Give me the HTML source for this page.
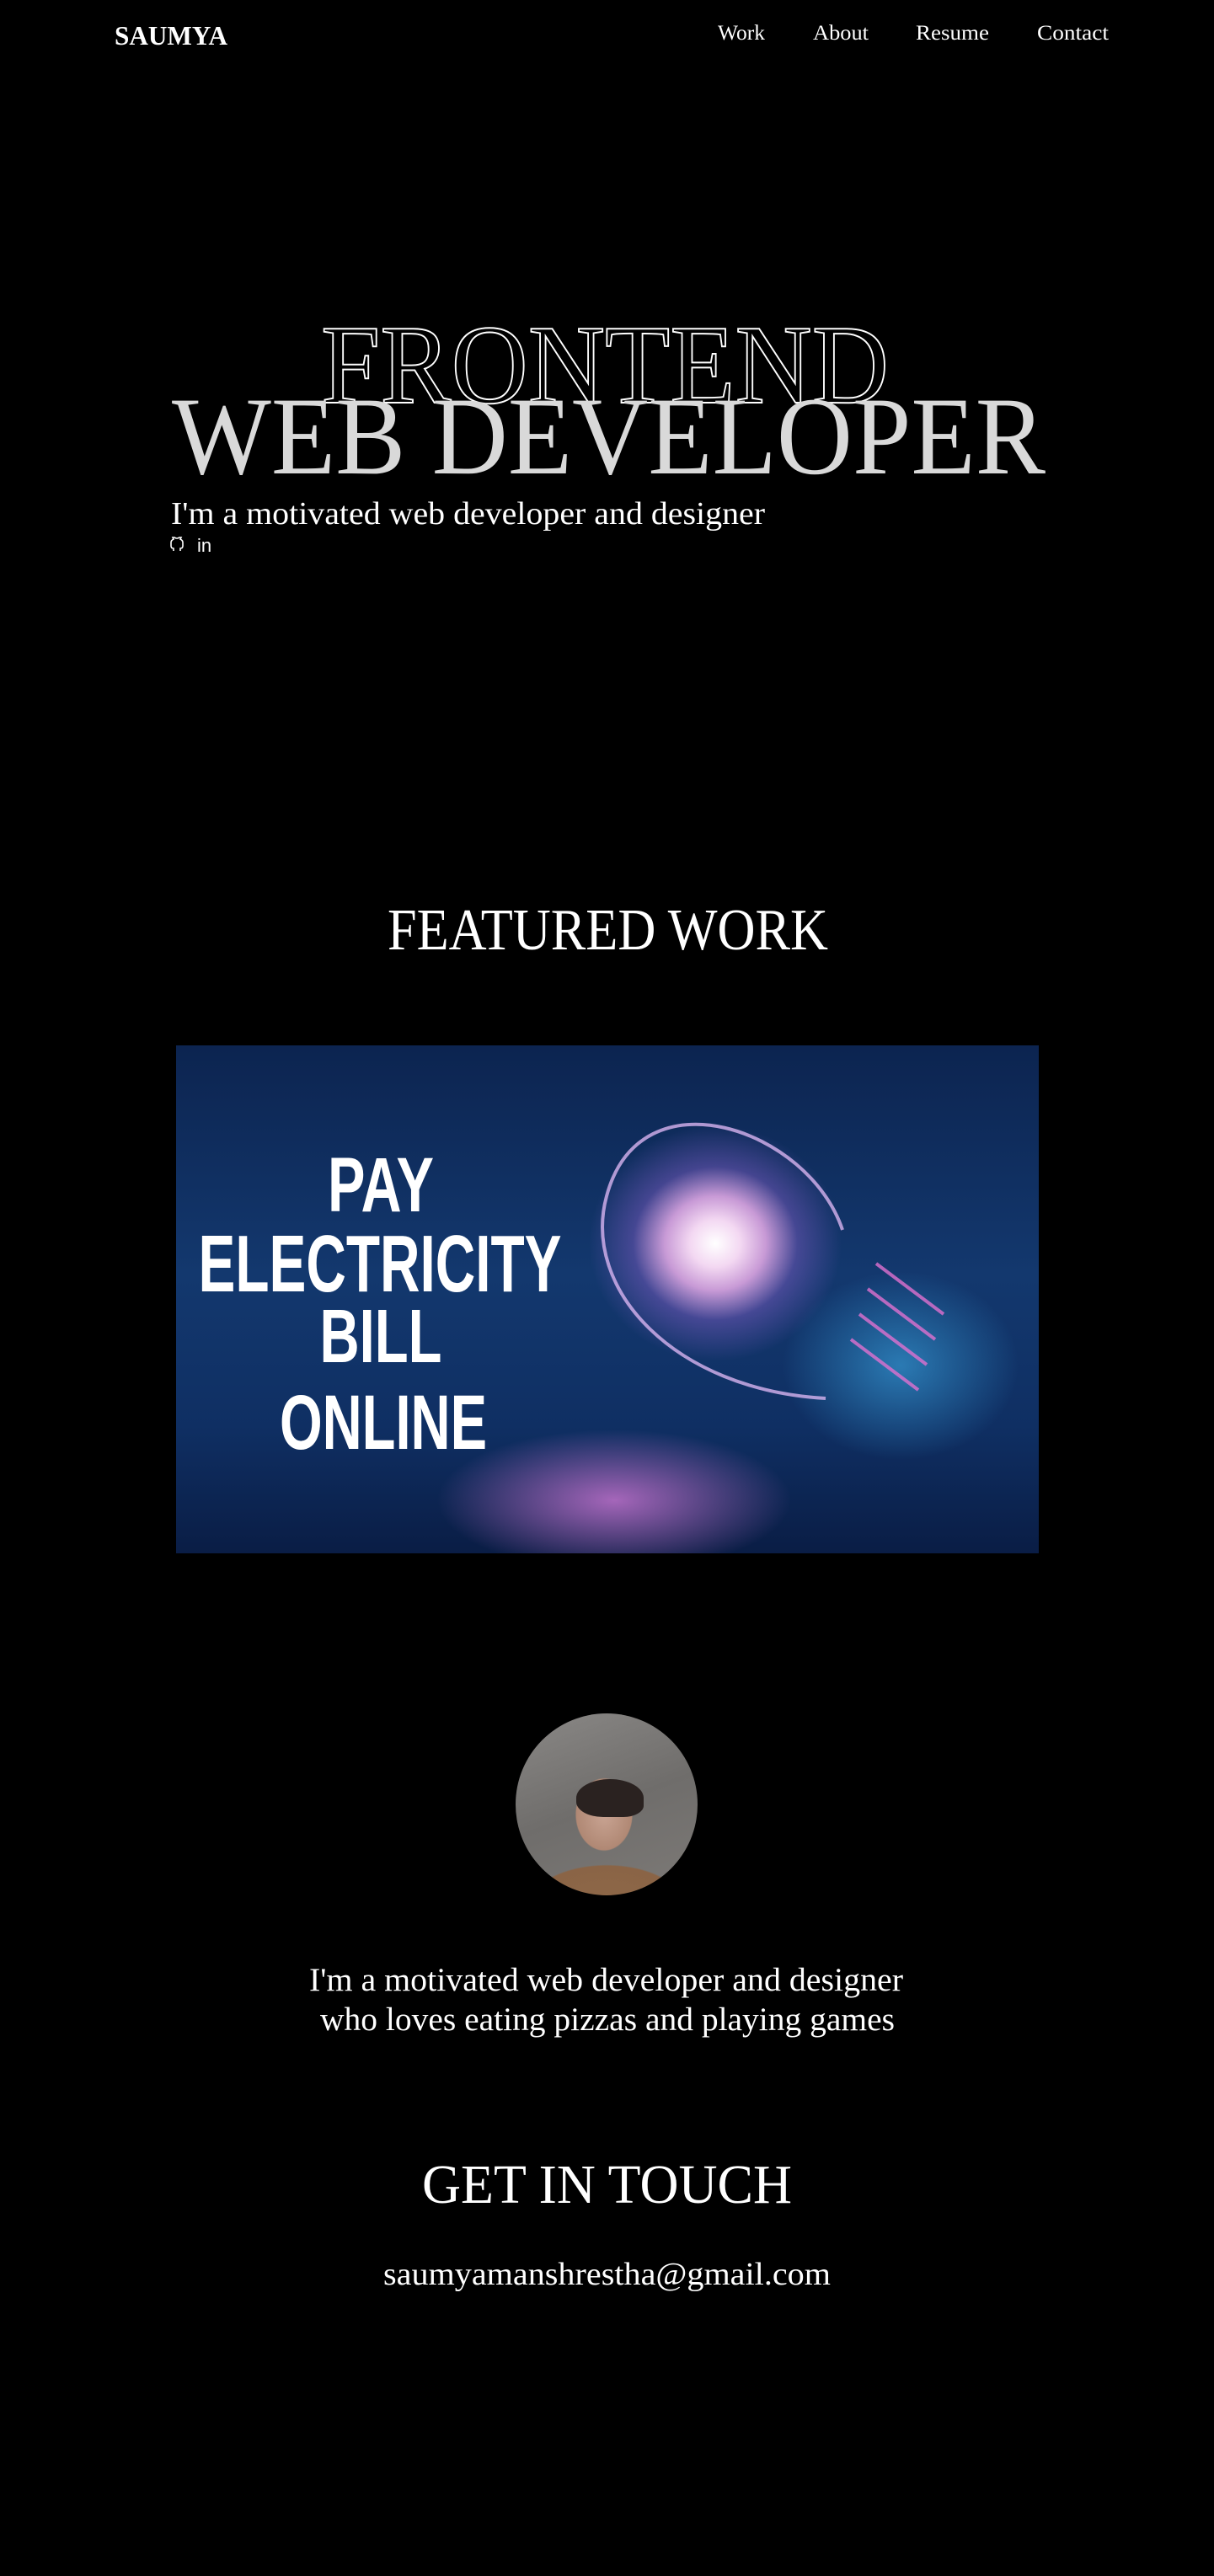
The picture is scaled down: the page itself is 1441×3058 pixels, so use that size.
<!DOCTYPE html>
<html><head><meta charset="utf-8"><style>
html,body{margin:0;padding:0;background:#000;}
body{width:1441px;height:3058px;position:relative;overflow:hidden;}
.img{position:absolute;left:209px;top:1241px;width:1024px;height:603px;overflow:hidden;
background:radial-gradient(ellipse 150px 140px at 640px 235px,#fff 0%,#f3d8f2 20%,#c89ad6 40%,rgba(120,90,190,.5) 65%,rgba(20,50,110,0) 100%),
radial-gradient(ellipse 300px 120px at 520px 540px,rgba(230,130,230,.7),rgba(60,80,180,0) 70%),
radial-gradient(ellipse 200px 160px at 860px 380px,rgba(60,170,230,.6),rgba(0,0,0,0) 70%),
linear-gradient(180deg,#0c2450 0%,#13386e 45%,#0f2f63 75%,#0a1d45 100%);}
.av{position:absolute;left:612px;top:2034px;width:216px;height:216px;border-radius:50%;overflow:hidden;
background:radial-gradient(ellipse 55px 70px at 105px 120px,#c9a493 0%,#b08874 60%,rgba(0,0,0,0) 62%),
radial-gradient(ellipse 130px 70px at 108px 230px,#8e6848 0%,#8a6446 70%,rgba(0,0,0,0) 72%),
linear-gradient(160deg,#8a8886,#6f6d6b 50%,#7d7a77);}
.hair{position:absolute;left:72px;top:78px;width:80px;height:45px;border-radius:50% 50% 30% 40%;background:#2a2220;}
</style></head><body>
<div class="img"></div>
<div class="av"><div class="hair"></div></div>
<svg width="1441" height="3058" style="position:absolute;left:0;top:0" xmlns="http://www.w3.org/2000/svg">
<g font-family="Liberation Serif, serif" fill="#fff">
<text x="136" y="53" font-size="32" font-weight="bold" textLength="134" lengthAdjust="spacingAndGlyphs">SAUMYA</text>
<text x="852" y="47" font-size="25" textLength="56" lengthAdjust="spacingAndGlyphs">Work</text>
<text x="965" y="47" font-size="25" textLength="66" lengthAdjust="spacingAndGlyphs">About</text>
<text x="1087" y="47" font-size="25" textLength="87" lengthAdjust="spacingAndGlyphs">Resume</text>
<text x="1231" y="47" font-size="25" textLength="85" lengthAdjust="spacingAndGlyphs">Contact</text>
<text x="381" y="478" font-size="134" fill="none" stroke="#fff" stroke-width="2" textLength="674" lengthAdjust="spacingAndGlyphs">FRONTEND</text>
<text x="204" y="562" font-size="132" fill="#d9d9d9" textLength="1037" lengthAdjust="spacingAndGlyphs">WEB DEVELOPER</text>
<text x="203" y="622" font-size="38" textLength="705" lengthAdjust="spacingAndGlyphs">I'm a motivated web developer and designer</text>
<text x="234" y="655" font-family="Liberation Sans, sans-serif" font-size="22">in</text>
<text x="460" y="1127" font-size="70" textLength="523" lengthAdjust="spacingAndGlyphs">FEATURED WORK</text>
<text x="367" y="2363" font-size="39" textLength="705" lengthAdjust="spacingAndGlyphs">I'm a motivated web developer and designer</text>
<text x="380" y="2410" font-size="39" textLength="682" lengthAdjust="spacingAndGlyphs">who loves eating pizzas and playing games</text>
<text x="501" y="2615" font-size="66" textLength="439" lengthAdjust="spacingAndGlyphs">GET IN TOUCH</text>
<text x="455" y="2712" font-size="38" textLength="531" lengthAdjust="spacingAndGlyphs">saumyamanshrestha@gmail.com</text>
</g>
<path d="M206 654v-3c-2 0-3-1-3-3v-4c0-2 1-3 3-4l-1-2 2 0 2 1h2l2-1 2 0-1 2c2 1 3 2 3 4v4c0 2-1 3-3 3v3" fill="none" stroke="#fff" stroke-width="1.6"/>
<g fill="none" stroke="#d8b4f0" stroke-width="4" opacity="0.8">
<path d="M1000 1460 C960 1340 760 1270 720 1420 C690 1530 800 1650 980 1660"/>
<path d="M1040 1500 l80 60 M1030 1530 l80 60 M1020 1560 l80 60 M1010 1590 l80 60" stroke="#e070d0"/>
</g>
<g font-family="Liberation Sans, sans-serif" font-weight="bold" fill="#fff" text-anchor="middle">
<text x="452" y="1438" font-size="92" textLength="126" lengthAdjust="spacingAndGlyphs">PAY</text>
<text x="451" y="1533" font-size="96" textLength="431" lengthAdjust="spacingAndGlyphs">ELECTRICITY</text>
<text x="452" y="1617" font-size="90" textLength="145" lengthAdjust="spacingAndGlyphs">BILL</text>
<text x="455" y="1720" font-size="92" textLength="246" lengthAdjust="spacingAndGlyphs">ONLINE</text>
</g>
</svg>
</body></html>
